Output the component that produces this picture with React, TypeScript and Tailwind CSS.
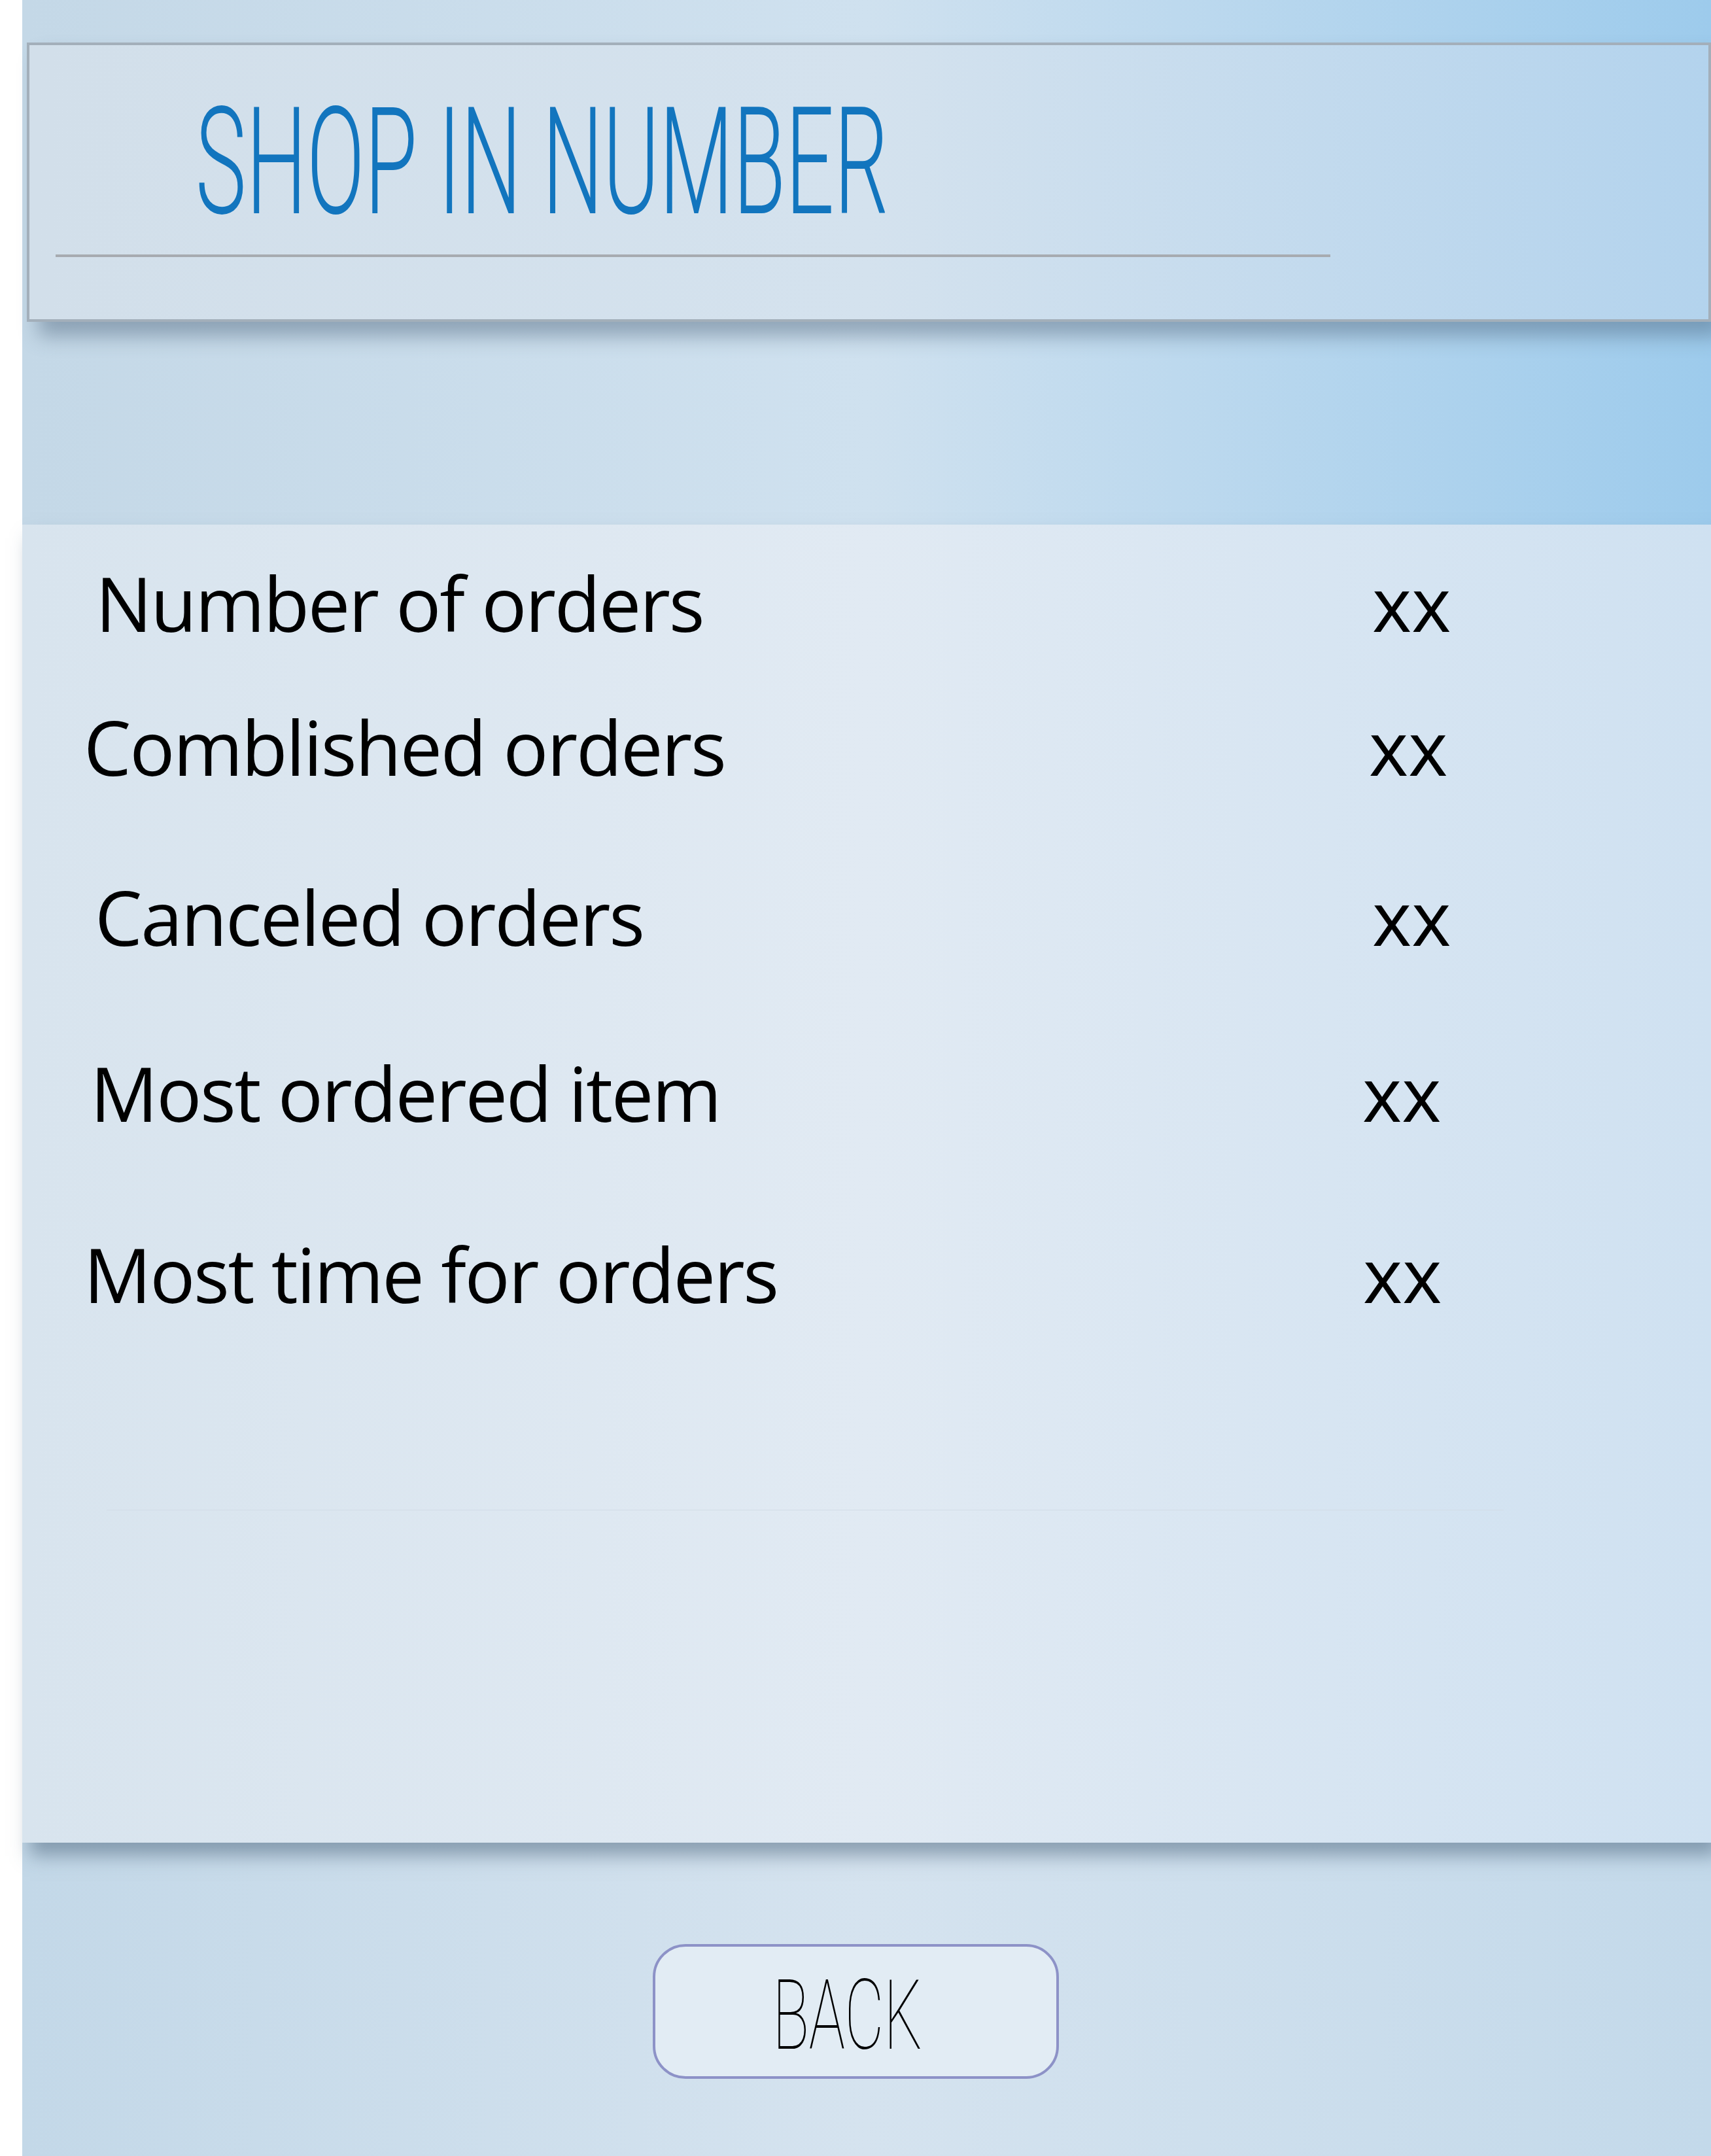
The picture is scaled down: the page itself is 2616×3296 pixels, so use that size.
import React from "react";

const rows = [
  { label: "Number of orders", pl: "pl-[112px]", w: "w-[2064px]", mt: "mt-[62px]" },
  { label: "Comblished orders", pl: "pl-[94px]", w: "w-[2059px]", mt: "mt-[105px]" },
  { label: "Canceled orders", pl: "pl-[111px]", w: "w-[2064px]", mt: "mt-[145px]" },
  { label: "Most ordered item", pl: "pl-[104px]", w: "w-[2049px]", mt: "mt-[154px]" },
  { label: "Most time for orders", pl: "pl-[94px]", w: "w-[2050px]", mt: "mt-[162px]" },
];

export default function App() {
  return (
    <div className="flex w-[2616px] h-[3296px] bg-white overflow-hidden">
      <div className="w-[34px] shrink-0 bg-white" />
      <div className="flex flex-col flex-1 min-w-0">
        {/* Top section */}
        <div className="h-[802px] shrink-0 bg-gradient-to-r from-[#c4d8e7] via-[#cfe1ef] to-[#9dcbec] pt-[65px] pl-[7px]">
          <div className="relative z-10 h-[427px] border-4 border-[#a3afba] bg-gradient-to-r from-[#d2dfea] via-[#d4e2ee] to-[#b3d3ed] shadow-[18px_22px_28px_rgba(70,95,120,0.45)] pt-[65px] pl-[254px]">
            <div
              className="origin-left scale-x-[0.573] whitespace-nowrap text-[228px] leading-none font-light text-[#1275be]"
              style={{ fontFamily: "Roboto, 'Liberation Sans', sans-serif" }}
            >
              SHOP IN NUMBER
            </div>
            <div className="ml-[-214px] mt-[27px] w-[1949px] h-[4px] bg-[#a7abb0]" />
          </div>
        </div>

        {/* Content panel */}
        <div
          className="relative z-10 h-[2015px] shrink-0 bg-gradient-to-r from-[#d8e4ee] via-[#e1eaf3] to-[#cfe1f1] shadow-[12px_20px_26px_rgba(70,95,120,0.5)] flex flex-col"
          style={{ fontFamily: "'Open Sans', 'Noto Sans', sans-serif" }}
        >
          {rows.map((r) => (
            <div key={r.label} className={`flex text-[115px] leading-none text-black tracking-[-0.02em] ${r.mt}`}>
              <div className={`${r.w} ${r.pl} shrink-0 whitespace-nowrap`}>{r.label}</div>
              <div className="tracking-normal">xx</div>
            </div>
          ))}
          <div className="mt-[303px] ml-[129px] w-[2136px] border-t border-[#d2dce7]" />
        </div>

        {/* Bottom section */}
        <div className="flex-1 bg-gradient-to-r from-[#c3d8e8] via-[#d5e3ef] to-[#c3d9ea] pt-[155px] pl-[964px]">
          <div className="w-[621px] h-[206px] rounded-[50px] border-4 border-[#8d92c7] bg-[#e2ecf4] flex items-center justify-center">
            <div className="w-[240px] flex justify-center mr-[26px]">
              <span
                className="inline-block scale-x-[0.62] whitespace-nowrap text-[149px] leading-none font-thin text-black translate-y-[6px]"
                style={{ fontFamily: "Roboto, 'Liberation Sans', sans-serif" }}
              >
                BACK
              </span>
            </div>
          </div>
        </div>
      </div>
    </div>
  );
}
